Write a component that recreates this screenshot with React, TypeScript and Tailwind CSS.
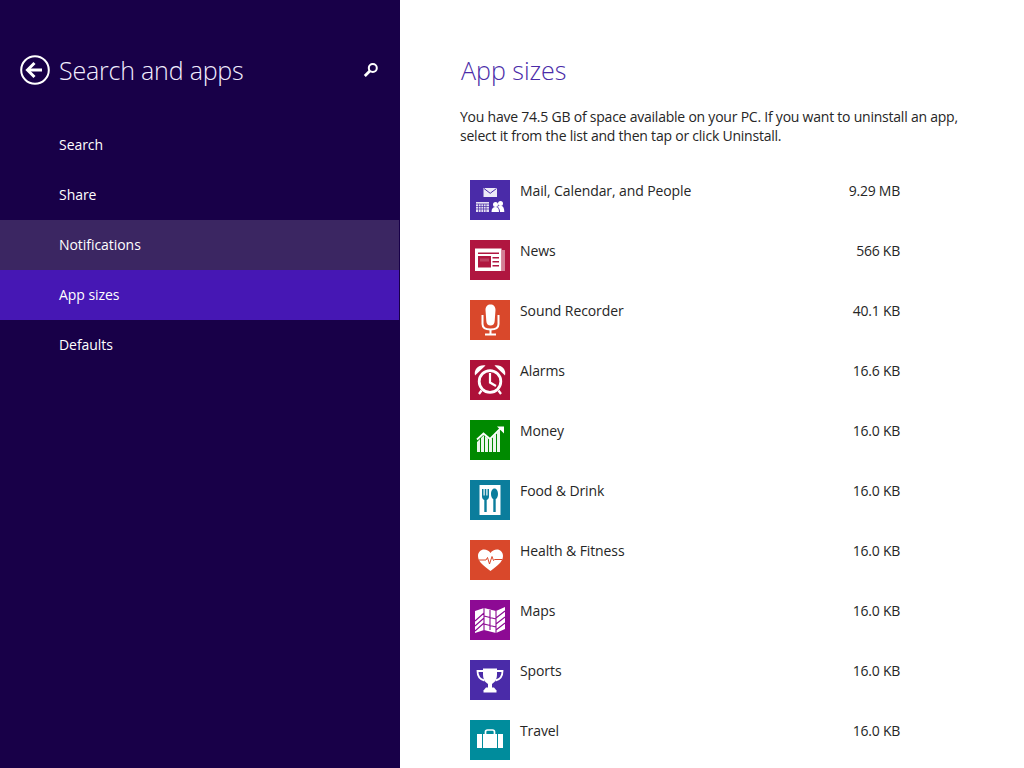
import React from "react";

const F = "[font-family:'Open_Sans','Noto_Sans',sans-serif]";

const Mail = () => (
  <svg viewBox="0 0 40 40" className="w-10 h-10">
    <path d="M13.500 8h13.500v9h-13.500z" fill="#fff" fillOpacity=".9" />
    <path d="M14 8.500l6.200 4.800 6.300-4.800" fill="none" stroke="#4a2ba8" strokeWidth="1" />
    <path d="M6 22h13v10h-13z" fill="#fff" fillOpacity=".85" />
    <path d="M6 24h13M8.500 24v8M11 24v8M13.500 24v8M16 24v8M6 26.500h13M6 29h13" stroke="#4a2ba8" strokeWidth="0.7" />
    <circle cx="25.500" cy="24.500" r="2.500" fill="#fff" />
    <circle cx="30.500" cy="23.500" r="2.500" fill="#fff" />
    <path d="M21.500 32c0-3.500 1.500-5 4-5s3.500 1.500 3.500 5zM27.500 26.500c1-.6 2-.8 3-.8 2.500 0 3.800 2 3.800 6.300h-4.300c0-2.500-.8-4-2.500-5.500z" fill="#fff" />
  </svg>
);
const News = () => (
  <svg viewBox="0 0 40 40" className="w-10 h-10">
    <path d="M32 10h3v21h-3z" fill="#fff" fillOpacity=".45" />
    <path d="M5 8.500h26.500v22.500h-26.500z" fill="#fff" />
    <path d="M8 12.500h21v1.500h-21z" fill="#b01640" />
    <path d="M8 16h13v11.500h-13z" fill="#b01640" />
    <path d="M10 18.500h9v3h-9z" fill="#fff" fillOpacity=".18" />
    <path d="M22.500 17h6.500v1.500h-6.500zM22.500 21h6.500v1.500h-6.500zM22.500 25h6.500v1.500h-6.500z" fill="#b01640" />
  </svg>
);
const Mic = () => (
  <svg viewBox="0 0 40 40" className="w-10 h-10">
    <path d="M15.500 10c0-3.500 2-5.500 5-5.500s5 2 5 5.500l-.8 11c-.2 3-1.800 4.500-4.200 4.500s-4-1.500-4.200-4.500z" fill="#fff" />
    <path d="M12.500 15v9c0 3.500 3 5.500 8 5.500s8-2 8-5.500v-9" fill="none" stroke="#fff" strokeWidth="2" />
    <path d="M20.500 29v5M15 34.500h11" stroke="#fff" strokeWidth="2" fill="none" />
  </svg>
);
const Alarm = () => (
  <svg viewBox="0 0 40 40" className="w-10 h-10">
    <circle cx="20" cy="21.500" r="10.800" fill="none" stroke="#fff" strokeWidth="2.800" />
    <path d="M20 13v9.500l6 3.500" fill="none" stroke="#fff" strokeWidth="2.200" />
    <path d="M5 15.500c-1.500-6 3.500-11 10.500-10z" fill="#fff" />
    <path d="M35 15.500c1.500-6-3.500-11-10.500-10z" fill="#fff" />
    <path d="M11.500 30.500l-2.500 3.500M28.500 30.500l2.500 3.500" stroke="#fff" strokeWidth="2.200" />
  </svg>
);
const Money = () => (
  <svg viewBox="0 0 40 40" className="w-10 h-10">
    <path d="M7 32v-10l3-3v13zM11 32v-14l3-3v17zM15 32v-16l3 2.500v13.500zM19 32v-12.500l3-1v13.500zM23 32v-15l3-3v18zM27 32v-19l3-3v22z" fill="#fff" fillOpacity=".92" />
    <path d="M7 19.500l6.500-6 6.500 5.500 11-11" fill="none" stroke="#fff" strokeWidth="1.800" />
    <path d="M27 6.500h7v7z" fill="#fff" />
  </svg>
);
const Food = () => (
  <svg viewBox="0 0 40 40" className="w-10 h-10">
    <path d="M9.500 5h21v30h-21z" fill="#fff" />
    <path d="M12 9v7.500c0 2 1 3 2.300 3.500v12h2.400v-12c1.300-.5 2.300-1.500 2.300-3.500v-7.500h-1.500v6.500h-1.200v-6.500h-1.600v6.500h-1.200v-6.500z" fill="#0b7d9c" />
    <path d="M24.500 8.500c-2.200 0-3.500 2.700-3.500 5.500 0 2.700 1 4.500 2.300 5v13h2.400v-13c1.300-.5 2.300-2.300 2.300-5 0-2.800-1.300-5.500-3.500-5.500z" fill="#0b7d9c" />
  </svg>
);
const Health = () => (
  <svg viewBox="0 0 40 40" className="w-10 h-10">
    <path d="M20.500 31c-6-4.500-12.500-9-12.500-15 0-4 3-6.500 6-6.500 2.500 0 5.300 1.500 6.500 3.500 1.200-2 4-3.500 6.500-3.500 3 0 6 2.500 6 6.500 0 6-6.500 10.500-12.500 15z" fill="#fff" />
    <path d="M9 20h7l1.500-2.500 2 6.500 2.500-7.500 1.500 4 1.200-1h7.300" fill="none" stroke="#d9482b" strokeWidth="1" />
  </svg>
);
const Maps = () => (
  <svg viewBox="0 0 40 40" className="w-10 h-10">
    <path d="M5 11l9-3 12 3 9-4v22l-9 4-12-3-9 3z" fill="#fff" />
    <path d="M5 21l9-8M5 26l9-8M5 31l9-8M14 8v22M26 11v22M14 16l12 3M14 24l12 3M26 18l9-7M26 24l9-7M26 30l9-7M20 10v20" fill="none" stroke="#8d0a94" strokeWidth="1.100" />
  </svg>
);
const Trophy = () => (
  <svg viewBox="0 0 40 40" className="w-10 h-10">
    <path d="M13 8.500h14v6c0 5-2.500 8-5 9.500v4h-4v-4c-2.500-1.500-5-4.500-5-9.500z" fill="#fff" />
    <path d="M13 11h-5.500c0 5.500 2 8.500 7 9.500M27 11h5.500c0 5.500-2 8.500-7 9.500" fill="none" stroke="#fff" strokeWidth="1.800" />
    <path d="M16 27.500h8l2.500 3v2h-13v-2z" fill="#fff" />
  </svg>
);
const Case = () => (
  <svg viewBox="0 0 40 40" className="w-10 h-10">
    <path d="M7 14h5v14h-5zM13 14h14v14h-14zM28 14h5v14h-5z" fill="#fff" />
    <path d="M15.500 14v-2c0-1.200.8-2 2-2h5c1.200 0 2 .8 2 2v2" fill="none" stroke="#fff" strokeWidth="1.700" />
  </svg>
);

const apps = [
  { name: "Mail, Calendar, and People", size: "9.29 MB", bg: "bg-[#4a2ba8]", Icon: Mail },
  { name: "News", size: "566 KB", bg: "bg-[#b01640]", Icon: News },
  { name: "Sound Recorder", size: "40.1 KB", bg: "bg-[#d9482b]", Icon: Mic },
  { name: "Alarms", size: "16.6 KB", bg: "bg-[#ae1139]", Icon: Alarm },
  { name: "Money", size: "16.0 KB", bg: "bg-[#008a00]", Icon: Money },
  { name: "Food & Drink", size: "16.0 KB", bg: "bg-[#0b7d9c]", Icon: Food },
  { name: "Health & Fitness", size: "16.0 KB", bg: "bg-[#d9482b]", Icon: Health },
  { name: "Maps", size: "16.0 KB", bg: "bg-[#8d0a94]", Icon: Maps },
  { name: "Sports", size: "16.0 KB", bg: "bg-[#4a2ba8]", Icon: Trophy },
  { name: "Travel", size: "16.0 KB", bg: "bg-[#008c9c]", Icon: Case },
];

const nav = [
  { label: "Search", cls: "" },
  { label: "Share", cls: "" },
  { label: "Notifications", cls: "bg-[#3b2662]" },
  { label: "App sizes", cls: "bg-[#4617b4]" },
  { label: "Defaults", cls: "" },
];

export default function App() {
  return (
    <div className={`flex w-[1024px] h-[768px] overflow-hidden bg-white ${F}`}>
      <aside className="w-[400px] shrink-0 bg-[#180048] text-white">
        <div className="h-[120px] flex items-start pt-[53px] pl-[20px] pr-[21px]">
          <svg viewBox="0 0 30 30" className="w-[30px] h-[30px] shrink-0 mt-[2px]">
            <circle cx="15" cy="15" r="13.800" fill="none" stroke="#fff" strokeWidth="2" />
            <path d="M8 15h14" stroke="#fff" strokeWidth="3" />
            <path d="M14.500 8l-7 7 7 7" fill="none" stroke="#fff" strokeWidth="3" />
          </svg>
          <h1 className="ml-[9px] text-[25px] leading-[34px] font-light tracking-[-0.2px] text-[#f2eeff]">Search and apps</h1>
          <svg viewBox="0 0 16 16" className="ml-auto w-4 h-4 mt-[9px]">
            <circle cx="9.800" cy="6" r="4" fill="none" stroke="#fff" strokeWidth="2" />
            <path d="M6.800 9l-5 5" stroke="#fff" strokeWidth="2.800" />
          </svg>
        </div>
        <nav className="mr-px">
          {nav.map((n) => (
            <div key={n.label} className={`h-[50px] flex items-center pb-[2px] pl-[59px] text-[14px] tracking-[-0.05px] ${n.cls}`}>
              {n.label}
            </div>
          ))}
        </nav>
      </aside>
      <main className="flex-1 pl-[60px] pt-[53px] text-[#262626]">
        <h2 className="ml-px text-[25px] leading-[34px] font-light text-[#4a2ba8]">App sizes</h2>
        <p className="mt-[20px] w-[510px] text-[14px] leading-[19px] tracking-[-0.225px]">
          You have 74.5 GB of space available on your PC. If you want to uninstall an app, select it from the list and then tap or click Uninstall.
        </p>
        <ul className="mt-[35px] ml-[10px] w-[430px]">
          {apps.map(({ name, size, bg, Icon }) => (
            <li key={name} className="flex h-[60px] items-start">
              <div className={`w-10 h-10 shrink-0 ${bg}`}><Icon /></div>
              <span className="ml-[10px] text-[14px] leading-[22px] tracking-[-0.1px]">{name}</span>
              <span className="ml-auto text-[14px] leading-[22px] tracking-[-0.25px]">{size}</span>
            </li>
          ))}
        </ul>
      </main>
    </div>
  );
}
